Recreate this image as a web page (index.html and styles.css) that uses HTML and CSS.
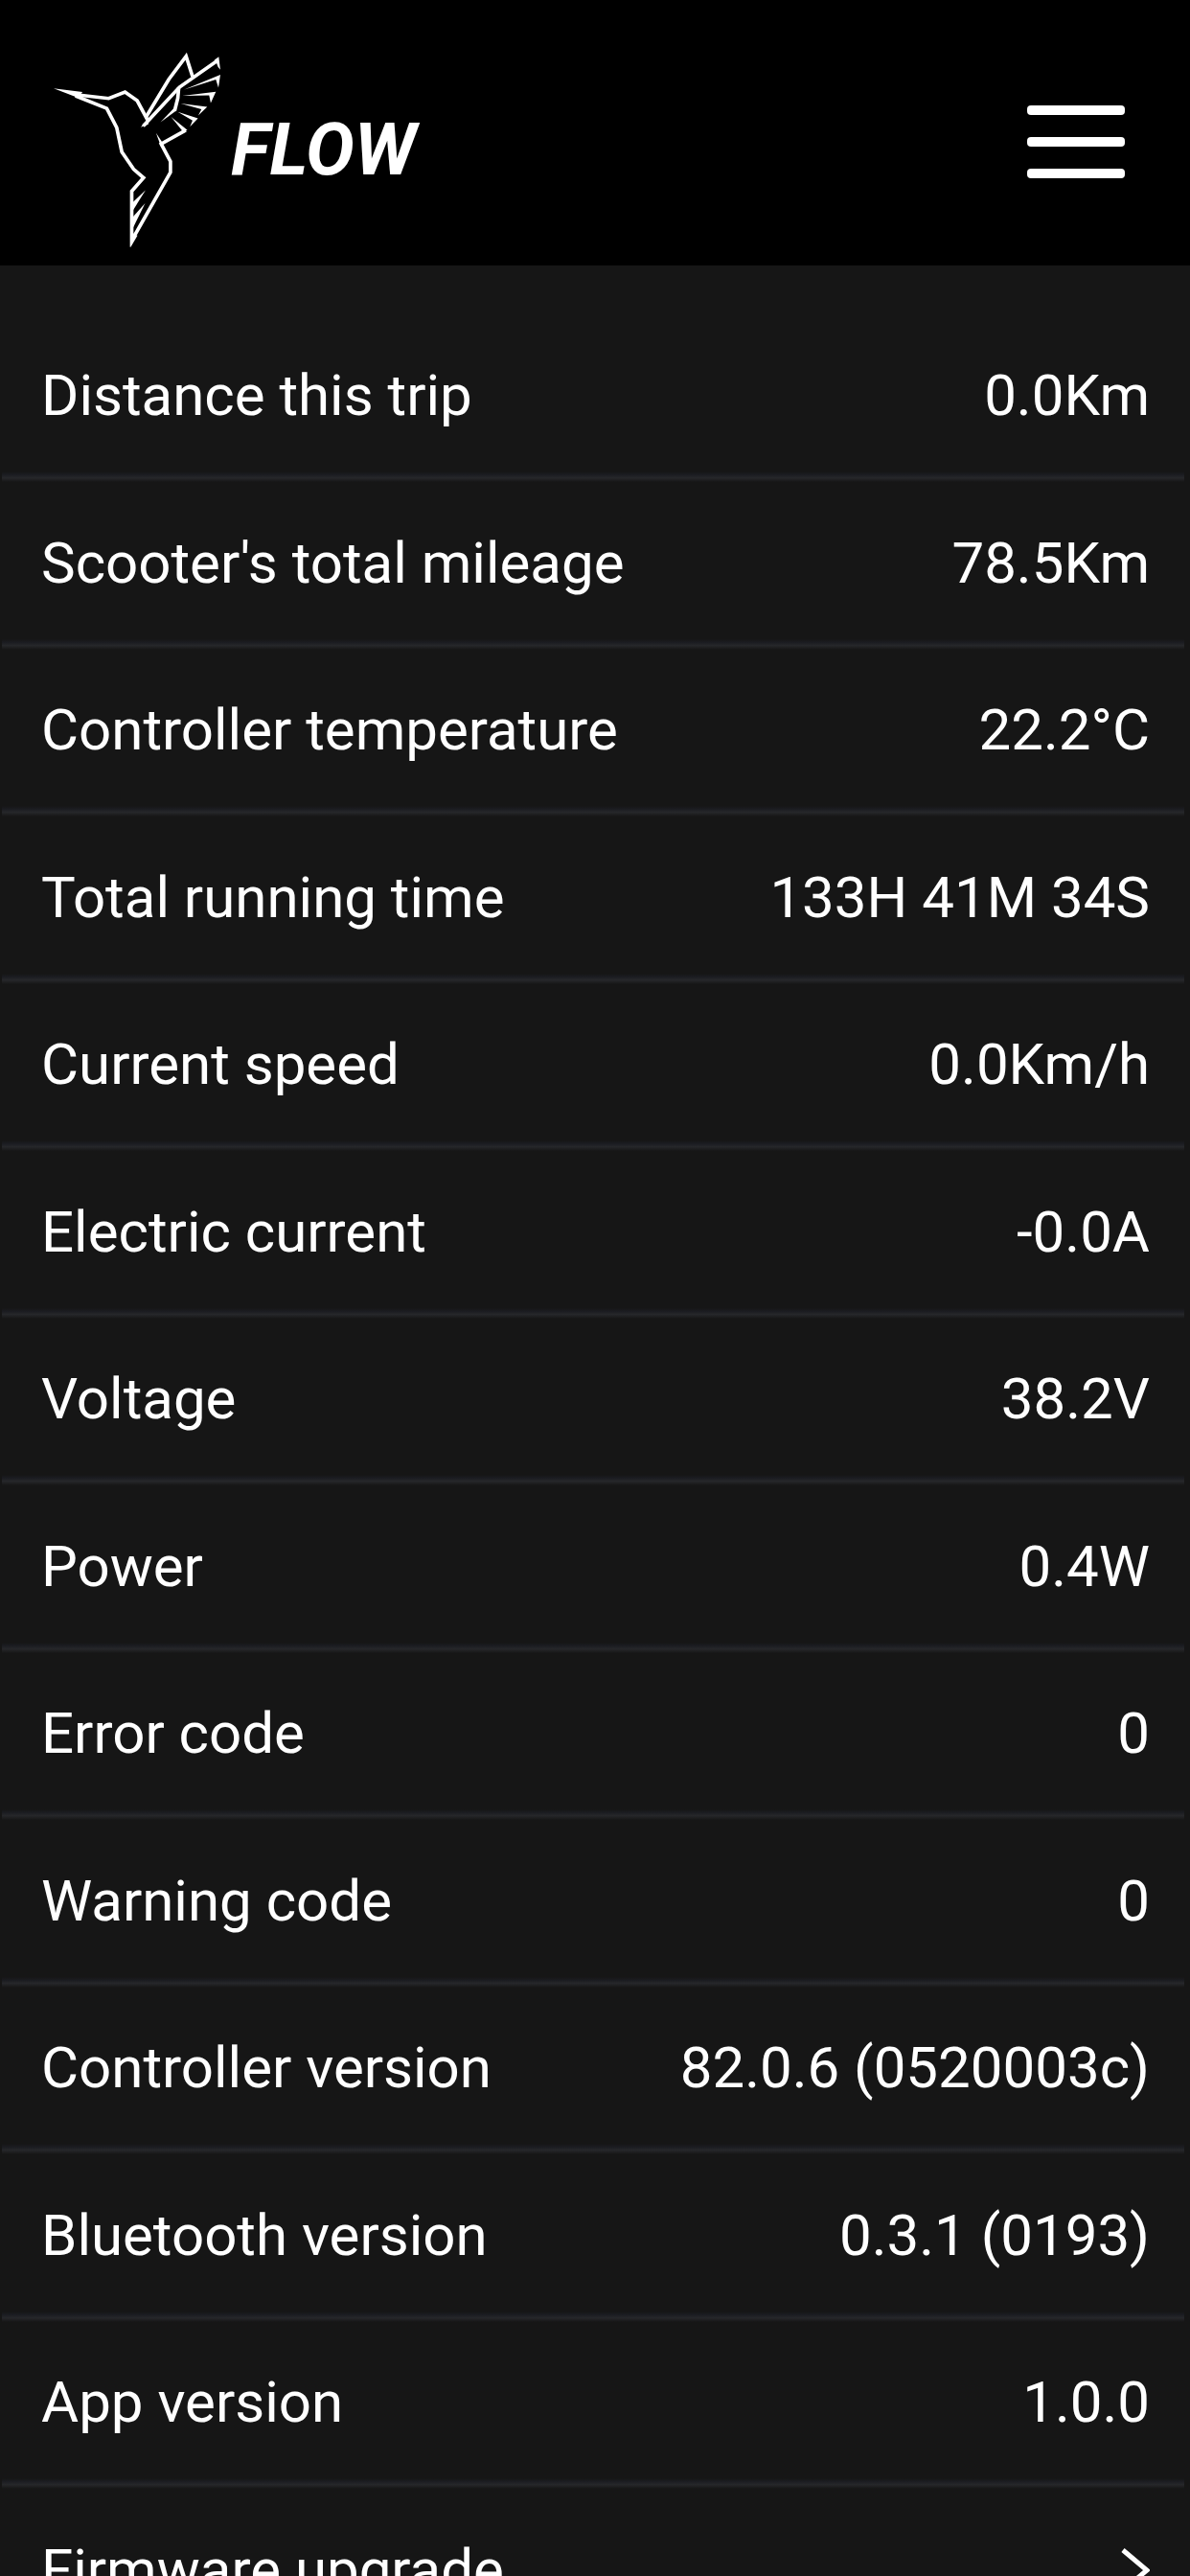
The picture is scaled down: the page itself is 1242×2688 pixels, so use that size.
FILE: index.html
```html
<!DOCTYPE html>
<html lang="en">
<head>
<meta charset="utf-8">
<meta name="viewport" content="width=device-width, initial-scale=1">
<title>Flow</title>
<link rel="stylesheet" href="styles.css">
</head>
<body>
<header class="topbar">
  <a class="brand" href="#">
    <svg class="bird" viewBox="0 0 530 620" aria-hidden="true">
      <g transform="translate(-50 -40)">
        <g fill="none" stroke="#fff" stroke-width="11">
          <path d="M118 174 L222 186 L273 166 L311 193 L345 256"/>
          <path d="M118 178 L216 217 L247 277 L263 353 L300 407 L331 434 L294 476 L294 630 L415 417 L415 383 L386 328 L463 285"/>
          <path d="M338 245 L410 126 L464 54 L484 117"/>
          <path d="M330 272 L443 151 L564 66"/>
          <path d="M441 152 L438 185 L428 225"/>
        </g>
        <g fill="#fff">
          <path d="M48 154 L140 166 L126 184Z"/>
          <path d="M290 652 L290 610 L312 614Z"/>
          <path d="M322 276 L345 250 L346 267Z"/>
          <path d="M552 66 L566 56 L571 96 L564 88 L558 72Z"/>
          <path d="M458 158 L571 112 L565 152 L557 127Z"/>
          <path d="M452 178 L557 165 L541 200 L536 176Z"/>
          <path d="M447 202 L530 212 L502 239 L512 220Z"/>
          <path d="M438 228 L501 248 L476 274 L484 255Z"/>
          <path d="M417 244 L468 285 L454 289Z"/>
          <path d="M384 260 L424 218 L432 225Z"/>
          <path d="M370 294 L393 328 L386 338Z"/>
          <path d="M296 512 L337 473 L298 536Z"/>
          <path d="M296 558 L336 513 L298 590Z"/>
        </g>
      </g>
    </svg>
    <span class="wordmark">FLOW</span>
  </a>
  <button class="menu" type="button" aria-label="Menu">
    <span class="bar"></span><span class="bar"></span><span class="bar"></span>
  </button>
</header>
<main class="content">
  <ul class="list">
    <li class="row"><span>Distance this trip</span><span>0.0Km</span></li>
    <li class="row"><span>Scooter's total mileage</span><span>78.5Km</span></li>
    <li class="row"><span>Controller temperature</span><span>22.2°C</span></li>
    <li class="row"><span>Total running time</span><span>133H 41M 34S</span></li>
    <li class="row"><span>Current speed</span><span>0.0Km/h</span></li>
    <li class="row"><span>Electric current</span><span>-0.0A</span></li>
    <li class="row"><span>Voltage</span><span>38.2V</span></li>
    <li class="row"><span>Power</span><span>0.4W</span></li>
    <li class="row"><span>Error code</span><span>0</span></li>
    <li class="row"><span>Warning code</span><span>0</span></li>
    <li class="row"><span>Controller version</span><span>82.0.6 (0520003c)</span></li>
    <li class="row"><span>Bluetooth version</span><span>0.3.1 (0193)</span></li>
    <li class="row"><span>App version</span><span>1.0.0</span></li>
    <li><a class="row" href="#"><span>Firmware upgrade</span>
      <svg class="chevron" viewBox="0 0 30 46" aria-hidden="true"><path d="M2 2 L27 23 L2 44" fill="none" stroke="#fff" stroke-width="5"/></svg></a></li>
  </ul>
</main>
</body>
</html>
```
FILE: styles.css
```css
* {
  box-sizing: border-box;
}

body {
  margin: 0;
  height: 100vh;
  display: flex;
  flex-direction: column;
  background: #161616;
  color: #fff;
  font-family: Roboto, "Liberation Sans", sans-serif;
  font-size: 60px;
  line-height: 72px;
}

a {
  color: inherit;
  text-decoration: none;
}

.topbar {
  flex: none;
  display: flex;
  justify-content: space-between;
  align-items: flex-start;
  padding: 54px 60px 16px 56px;
  background: #000;
}

.brand {
  display: flex;
}

.bird {
  width: 177px;
  height: 207px;
}

.wordmark {
  margin-left: 8px;
  padding-top: 52px;
  font-size: 76px;
  line-height: 100px;
  font-weight: 700;
  font-style: italic;
}

.menu {
  display: flex;
  flex-direction: column;
  gap: 23px;
  padding: 56px 8px 20px;
  border: 0;
  background: none;
}

.bar {
  width: 102px;
  height: 10px;
  border-radius: 4px;
  background: #fff;
}

.content {
  flex: 1;
  min-height: 0;
  padding-top: 52px;
  overflow-y: auto;
  scrollbar-width: none;
}

.list {
  display: grid;
  grid-auto-rows: 174px 175px;
  margin: 0 6px 0 2px;
  padding: 0;
  list-style: none;
}

.row {
  display: flex;
  justify-content: space-between;
  align-items: center;
  height: 100%;
  padding: 0 36px 6px 41px;
  background: linear-gradient(#161616, #1b1c21 30%, #26272a 60%, #161616) bottom / 100% 11px no-repeat;
}

.chevron {
  width: 30px;
  height: 46px;
}
```
